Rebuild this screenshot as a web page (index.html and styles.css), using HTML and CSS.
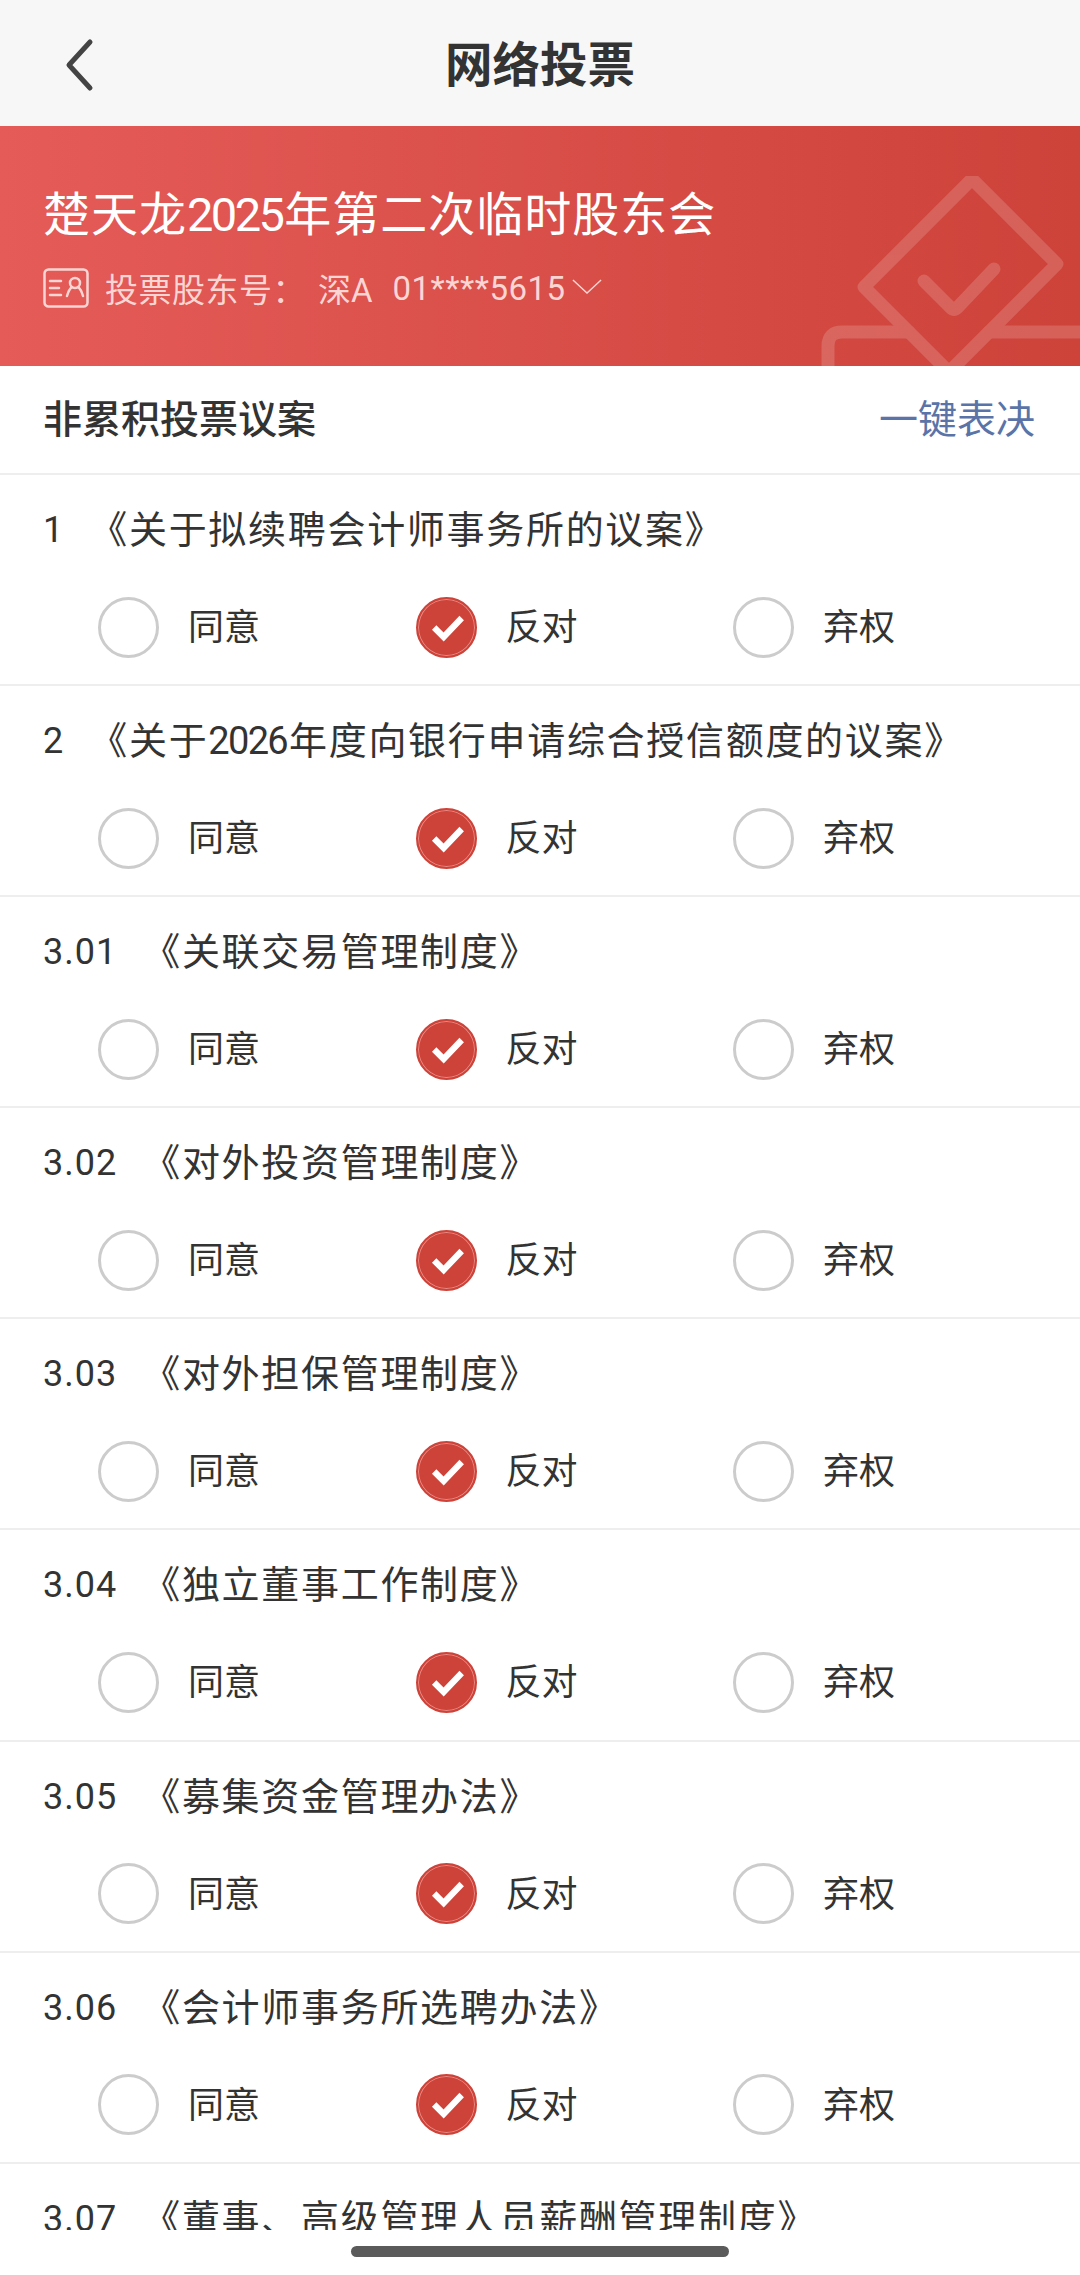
FILE: index.html
```html
<!DOCTYPE html>
<html lang="zh-CN">
<head>
<meta charset="utf-8">
<title>网络投票</title>
<link rel="stylesheet" href="styles.css">
</head>
<body>
<div class="page">
  <header class="nav">
    <svg class="back" viewBox="0 0 40 60"><path d="M30 8 L9 31 L30 54"/></svg>
    <h1 class="nav-title">网络投票</h1>
  </header>
  <section class="banner">
    <svg class="watermark" viewBox="821 177 260 190"><g><path d="M973 180 L1058 265 L950 373 L865 288 Z"/><path d="M925 282 L952 309 Q955 312 958 309 L995 270"/><path d="M829 372 V347 Q829 333 843 333 H910"/><path d="M990 333 H1085"/></g></svg>
    <h2 class="meeting">楚天龙<span class="tight">2025</span>年第二次临时股东会</h2>
    <div class="holder">
      <svg class="card" viewBox="0 0 46 40"><rect x="1.5" y="1.5" width="43" height="37" rx="4"/><path d="M7 13h11M7 20h9M7 27h11"/><circle cx="32" cy="15" r="5"/><path d="M24 28 Q26 21 29 19 M40 28 Q38 21 35 19"/></svg>
      <span class="holder-label">投票股东号：</span>
      <span class="holder-value">深A</span>
      <span class="holder-value holder-num">01****5615</span>
      <svg class="caret" viewBox="0 0 32 16"><path d="M1 1 L16 15 L31 1"/></svg>
    </div>
  </section>
  <section class="section-head">
    <span class="section-title">非累积投票议案</span>
    <span class="section-link">一键表决</span>
  </section>
  <section class="list" id="list">
    <article class="row"><div class="row-title"><span class="num">1</span><span class="name">《关于拟续聘会计师事务所的议案》</span></div><div class="options"><div class="opt"><i class="radio"></i><span>同意</span></div><div class="opt"><i class="radio on"><svg viewBox="0 0 60 60"><path d="M17 30 L27 40 L46 20"/></svg></i><span>反对</span></div><div class="opt"><i class="radio"></i><span>弃权</span></div></div></article>
    <article class="row"><div class="row-title"><span class="num">2</span><span class="name">《关于<span class="tight-sm">2026</span>年度向银行申请综合授信额度的议案》</span></div><div class="options"><div class="opt"><i class="radio"></i><span>同意</span></div><div class="opt"><i class="radio on"><svg viewBox="0 0 60 60"><path d="M17 30 L27 40 L46 20"/></svg></i><span>反对</span></div><div class="opt"><i class="radio"></i><span>弃权</span></div></div></article>
    <article class="row"><div class="row-title"><span class="num">3.01</span><span class="name">《关联交易管理制度》</span></div><div class="options"><div class="opt"><i class="radio"></i><span>同意</span></div><div class="opt"><i class="radio on"><svg viewBox="0 0 60 60"><path d="M17 30 L27 40 L46 20"/></svg></i><span>反对</span></div><div class="opt"><i class="radio"></i><span>弃权</span></div></div></article>
    <article class="row"><div class="row-title"><span class="num">3.02</span><span class="name">《对外投资管理制度》</span></div><div class="options"><div class="opt"><i class="radio"></i><span>同意</span></div><div class="opt"><i class="radio on"><svg viewBox="0 0 60 60"><path d="M17 30 L27 40 L46 20"/></svg></i><span>反对</span></div><div class="opt"><i class="radio"></i><span>弃权</span></div></div></article>
    <article class="row"><div class="row-title"><span class="num">3.03</span><span class="name">《对外担保管理制度》</span></div><div class="options"><div class="opt"><i class="radio"></i><span>同意</span></div><div class="opt"><i class="radio on"><svg viewBox="0 0 60 60"><path d="M17 30 L27 40 L46 20"/></svg></i><span>反对</span></div><div class="opt"><i class="radio"></i><span>弃权</span></div></div></article>
    <article class="row"><div class="row-title"><span class="num">3.04</span><span class="name">《独立董事工作制度》</span></div><div class="options"><div class="opt"><i class="radio"></i><span>同意</span></div><div class="opt"><i class="radio on"><svg viewBox="0 0 60 60"><path d="M17 30 L27 40 L46 20"/></svg></i><span>反对</span></div><div class="opt"><i class="radio"></i><span>弃权</span></div></div></article>
    <article class="row"><div class="row-title"><span class="num">3.05</span><span class="name">《募集资金管理办法》</span></div><div class="options"><div class="opt"><i class="radio"></i><span>同意</span></div><div class="opt"><i class="radio on"><svg viewBox="0 0 60 60"><path d="M17 30 L27 40 L46 20"/></svg></i><span>反对</span></div><div class="opt"><i class="radio"></i><span>弃权</span></div></div></article>
    <article class="row"><div class="row-title"><span class="num">3.06</span><span class="name">《会计师事务所选聘办法》</span></div><div class="options"><div class="opt"><i class="radio"></i><span>同意</span></div><div class="opt"><i class="radio on"><svg viewBox="0 0 60 60"><path d="M17 30 L27 40 L46 20"/></svg></i><span>反对</span></div><div class="opt"><i class="radio"></i><span>弃权</span></div></div></article>
    <article class="row"><div class="row-title"><span class="num">3.07</span><span class="name">《董事、高级管理人员薪酬管理制度》</span></div></article>
  </section>
  <footer class="home-bar"><div class="home-pill"></div></footer>
</div>
</body>
</html>
```
FILE: styles.css
```css
* { box-sizing: border-box; }
html, body { margin: 0; padding: 0; background: #fff; }
body { font-family: "Roboto", "Noto Sans CJK SC", sans-serif; color: #333; }
.page { position: relative; width: 1080px; height: 2275px; overflow: hidden; }

.nav { height: 126px; padding-top: 5px; background: #f7f7f7; display: flex; align-items: center; justify-content: center; position: relative; }
.back { position: absolute; left: 60px; top: 34px; width: 40px; height: 60px; }
.back path { fill: none; stroke: #444; stroke-width: 5; stroke-linecap: round; stroke-linejoin: round; }
.nav-title { margin: 0; font-size: 47.5px; font-weight: 700; line-height: 60px; color: #333; }

.banner { position: relative; height: 240px; padding: 61px 0 0 43px; background: linear-gradient(90deg, #e55b58 0%, #cd4239 100%); overflow: hidden; }
.watermark { position: absolute; right: 0; bottom: 0; width: 260px; height: 190px; }
.watermark g { opacity: .16; }
.watermark path { fill: none; stroke: #fff; stroke-width: 13; stroke-linecap: round; stroke-linejoin: round; }
.meeting { margin: 0; font-size: 47px; font-weight: 400; line-height: 56px; color: #fff; letter-spacing: 1px; }
.tight { letter-spacing: -2.6px; margin-right: 2px; }
.holder { display: flex; align-items: center; margin-top: 24px; height: 42px; color: #fbd5d3; font-size: 33px; }
.card { width: 46px; height: 40px; margin-right: 16px; flex: none; }
.card rect, .card path, .card circle { fill: none; stroke: #fbd5d3; stroke-width: 2.5; stroke-linecap: round; }
.holder-label { letter-spacing: .5px; }
.holder-value { margin-left: 12px; letter-spacing: 0; }
.holder-num { margin-left: 20px; letter-spacing: .5px; }
.caret { width: 30px; height: 15px; margin-left: 6px; margin-top: -4px; }
.caret path { fill: none; stroke: #fbd5d3; stroke-width: 1.5; }

.section-head { height: 109px; padding: 0 45px 8px 43px; display: flex; align-items: center; justify-content: space-between; border-bottom: 2px solid #eee; }
.section-title { font-size: 39px; font-weight: 500; color: #333; }
.section-link { font-size: 39px; color: #5a74a8; }

.list { display: grid; grid-auto-rows: 211.1px; }
.row { padding: 33px 0 0 43px; border-bottom: 2px solid #eee; }
.row-title { display: flex; align-items: center; height: 44px; font-size: 36px; line-height: 44px; }
.num { letter-spacing: 1px; }
.name { margin-left: 25px; font-size: 38px; letter-spacing: 1.7px; }
.tight-sm { letter-spacing: -1.7px; margin-right: 2px; }
.options { display: grid; grid-template-columns: repeat(3, 317.5px); margin: 44.5px 0 0 55px; }
.opt { display: flex; align-items: center; gap: 29px; font-size: 36px; }
.opt span { position: relative; top: -3px; }
.radio { display: block; width: 61px; height: 61px; border-radius: 50%; border: 3px solid #ccc; background: #fff; }
.radio.on { background: #cd4339; border: 2px solid #cd4339; box-shadow: inset 0 0 0 1px #e88a84; }
.radio svg { display: block; width: 57px; height: 57px; }
.radio path { fill: none; stroke: #fff; stroke-width: 6.5; }

.home-bar { position: absolute; left: 0; right: 0; bottom: 0; height: 45px; background: #fff; }
.home-pill { width: 378px; height: 11px; margin: 16px auto 0; border-radius: 6px; background: #5b5b5b; }
```
